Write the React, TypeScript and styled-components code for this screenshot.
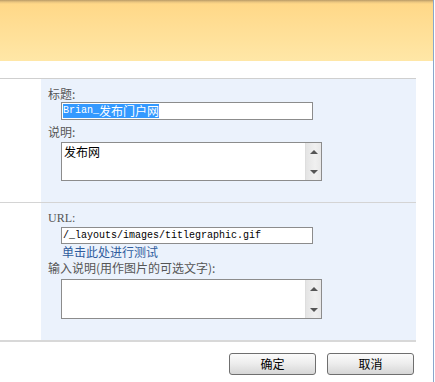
import React from "react";
import styled, { createGlobalStyle } from "styled-components";

const Global = createGlobalStyle`
  html, body { margin: 0; padding: 0; background: #fff; }
  body { font-family: "Noto Sans CJK SC", "Liberation Sans", sans-serif; font-size: 12px; }
`;

const Page = styled.div`
  width: 433px;
  height: 382px;
  border-right: 1px solid #8aa6cc;
  background: #fff;
  overflow: hidden;
`;

const Header = styled.div`
  height: 61px;
  background: linear-gradient(
    to bottom,
    #b89a66 0px,
    #e9c57f 2px,
    #ffd888 4px,
    #ffe7a7 61px
  );
`;

const Spacer = styled.div`
  height: 17px;
`;

const FormTable = styled.div`
  width: 416px;
  border-top: 1px solid #cfcfcf;
`;

const Row = styled.div<{ $h: number; $last?: boolean }>`
  display: grid;
  grid-template-columns: 41px 375px;
  height: ${(p) => p.$h}px;
  border-bottom: ${(p) => (p.$last ? "2px solid #d8d8d8" : "1px solid #d4d4d4")};
`;

const DescCell = styled.div`
  background: #fff;
`;

const FieldCell = styled.div<{ $pt: number }>`
  background: #ebf2fc;
  padding: ${(p) => p.$pt}px 0 0 7px;
  display: flex;
  flex-direction: column;
  align-items: flex-start;
`;

const Label = styled.div<{ $mono?: boolean; $mt?: number }>`
  height: 15px;
  line-height: 15px;
  color: #555;
  font-size: 12px;
  margin-top: ${(p) => p.$mt ?? 0}px;
  font-family: ${(p) =>
    p.$mono
      ? `"Liberation Serif", "Noto Sans CJK SC", serif`
      : `"Noto Sans CJK SC", sans-serif`};
`;

const Indent = styled.div<{ $mt?: number }>`
  margin-left: 13px;
  margin-top: ${(p) => p.$mt ?? 0}px;
`;

const TextField = styled.div<{ $h: number }>`
  box-sizing: border-box;
  width: 252px;
  height: ${(p) => p.$h}px;
  border: 1px solid #8c8c8c;
  background: #fff;
  padding: 0 0 0 1px;
  display: flex;
  align-items: center;
  font-family: "Liberation Mono", "Noto Sans CJK SC", monospace;
  font-size: 10px;
  color: #000;
  white-space: nowrap;
  overflow: hidden;
`;

const Cjk = styled.span`
  font-family: "Noto Sans CJK SC", sans-serif;
  font-size: 12px;
`;

const Selected = styled.span`
  background: #3399ff;
  color: #fff;
  line-height: 14px;
  height: 14px;
  display: inline-flex;
  align-items: center;
`;

const Memo = styled.div<{ $h: number }>`
  box-sizing: border-box;
  width: 261px;
  height: ${(p) => p.$h}px;
  border: 1px solid #8c8c8c;
  background: #fff;
  display: flex;
`;

const MemoText = styled.div`
  flex: 1;
  padding: 1px 2px;
  font-family: "Noto Sans CJK SC", sans-serif;
  font-size: 12px;
  line-height: 15px;
  color: #000;
`;

const ScrollTrack = styled.div`
  width: 16px;
  border-left: 1px solid #dedede;
  background: linear-gradient(to right, #e4e4e4, #f0f0f0 60%, #e8e8e8);
  display: flex;
  flex-direction: column;
  justify-content: space-between;
  align-items: center;
  padding: 7px 0 6px;
  box-sizing: border-box;
`;

const Arrow = styled.div<{ $down?: boolean }>`
  width: 0;
  height: 0;
  border-left: 4px solid transparent;
  border-right: 4px solid transparent;
  ${(p) =>
    p.$down
      ? "border-top: 4px solid #555;"
      : "border-bottom: 4px solid #555;"}
`;

const Link = styled.a`
  display: block;
  height: 15px;
  line-height: 15px;
  margin-left: 14px;
  color: #2f5c9c;
  text-decoration: none;
  font-size: 12px;
  font-family: "Noto Sans CJK SC", sans-serif;
`;

const ButtonBar = styled.div`
  width: 416px;
  display: flex;
  justify-content: flex-end;
  gap: 11px;
  padding: 11px 2px 0 0;
  box-sizing: border-box;
`;

const Button = styled.button`
  width: 87px;
  height: 22px;
  box-sizing: border-box;
  border: 1px solid #6f6f6f;
  border-radius: 3px;
  background: linear-gradient(to bottom, #fbfbfb 0%, #ececec 50%, #d6d6d6 100%);
  font-family: "Noto Sans CJK SC", sans-serif;
  font-size: 12px;
  color: #000;
  padding: 0;
  line-height: 18px;
`;

function Scroll() {
  return (
    <ScrollTrack>
      <Arrow />
      <Arrow $down />
    </ScrollTrack>
  );
}

export default function App() {
  return (
    <>
      <Global />
      <Page>
        <Header />
        <Spacer />
        <FormTable>
          <Row $h={123}>
            <DescCell />
            <FieldCell $pt={7}>
              <Label>标题:</Label>
              <Indent $mt={1}>
                <TextField $h={18}>
                  <Selected>
                    Brian_<Cjk>发布门户网</Cjk>
                  </Selected>
                </TextField>
              </Indent>
              <Label $mt={4}>说明:</Label>
              <Indent $mt={3}>
                <Memo $h={39}>
                  <MemoText>发布网</MemoText>
                  <Scroll />
                </Memo>
              </Indent>
            </FieldCell>
          </Row>
          <Row $h={137} $last>
            <DescCell />
            <FieldCell $pt={8}>
              <Label $mono>URL:</Label>
              <Indent $mt={1}>
                <TextField $h={17}>/_layouts/images/titlegraphic.gif</TextField>
              </Indent>
              <Link href="#">单击此处进行测试</Link>
              <Label $mt={1}>输入说明(用作图片的可选文字):</Label>
              <Indent $mt={4}>
                <Memo $h={40}>
                  <MemoText />
                  <Scroll />
                </Memo>
              </Indent>
            </FieldCell>
          </Row>
        </FormTable>
        <ButtonBar>
          <Button>确定</Button>
          <Button>取消</Button>
        </ButtonBar>
      </Page>
    </>
  );
}
